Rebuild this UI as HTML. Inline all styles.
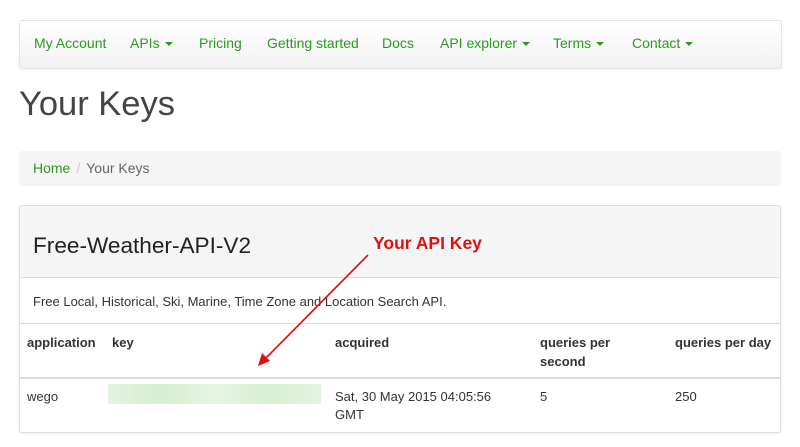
<!DOCTYPE html>
<html><head><style>
body{margin:0;width:800px;height:447px;background:#fff;font-family:"Liberation Sans",sans-serif;position:relative;overflow:hidden}
.a{position:absolute;white-space:nowrap}
.nav{left:19px;top:20px;width:761px;height:47px;border:1px solid #e4e4e4;border-radius:3px;background:linear-gradient(#fff,#f2f2f2);box-shadow:0 1px 3px rgba(0,0,0,.06)}
.n{top:35px;font-size:14px;color:#2b9a1f}
.c{display:inline-block;width:0;height:0;border-left:4px solid transparent;border-right:4px solid transparent;border-top:4px solid #2b9a1f;vertical-align:middle;margin-left:5px}
.t{font-size:13px;color:#333}
.b{font-weight:bold}
</style></head><body>
<div class="a nav"></div>
<div class="a n" style="left:34px">My Account</div>
<div class="a n" style="left:130px">APIs<span class="c"></span></div>
<div class="a n" style="left:199px">Pricing</div>
<div class="a n" style="left:267px">Getting started</div>
<div class="a n" style="left:382px">Docs</div>
<div class="a n" style="left:440px">API explorer<span class="c"></span></div>
<div class="a n" style="left:553px">Terms<span class="c"></span></div>
<div class="a n" style="left:632px">Contact<span class="c"></span></div>
<div class="a" style="left:19px;top:85px;font-size:34.5px;color:#444">Your Keys</div>
<div class="a" style="left:19px;top:151px;width:762px;height:35px;background:#f5f5f5;border-radius:3px"></div>
<div class="a" style="left:33px;top:160px;font-size:14px;color:#2b9a1f">Home<span style="color:#ccc;padding:0 6px">/</span><span style="color:#666">Your Keys</span></div>
<div class="a" style="left:19px;top:205px;width:760px;height:226px;border:1px solid #ddd;border-radius:3px;box-shadow:0 1px 2px rgba(0,0,0,.08)"></div>
<div class="a" style="left:20px;top:206px;width:760px;height:71px;background:#f5f5f5;border-bottom:1px solid #ddd"></div>
<div class="a" style="left:33px;top:233px;font-size:22.6px;color:#222">Free-Weather-API-V2</div>
<div class="a t" style="left:33px;top:294px">Free Local, Historical, Ski, Marine, Time Zone and Location Search API.</div>
<div class="a" style="left:20px;top:323px;width:760px;border-top:1px solid #ddd"></div>
<div class="a" style="left:20px;top:377px;width:760px;border-top:2px solid #ddd"></div>
<div class="a t b" style="left:27px;top:335px">application</div>
<div class="a t b" style="left:112px;top:335px">key</div>
<div class="a t b" style="left:335px;top:335px">acquired</div>
<div class="a t b" style="left:540px;top:333px;line-height:19px">queries per<br>second</div>
<div class="a t b" style="left:675px;top:335px">queries per day</div>
<div class="a t" style="left:27px;top:389px">wego</div>
<div class="a" style="left:108px;top:384px;width:213px;height:20px;background:linear-gradient(90deg,#e3f3df,#d6eed1,#e6f5e2,#d8efd3,#e3f3df)"></div>
<div class="a t" style="left:335px;top:388px;line-height:18px">Sat, 30 May 2015 04:05:56<br>GMT</div>
<div class="a t" style="left:540px;top:389px">5</div>
<div class="a t" style="left:675px;top:389px">250</div>
<div class="a b" style="left:373px;top:233px;font-size:17.5px;color:#e01010">Your API Key</div>
<svg class="a" style="left:0;top:0" width="800" height="447"><line x1="368" y1="255" x2="262" y2="362" stroke="#e01010" stroke-width="1.6"/><path d="M258 366 L262 353 L270 361 Z" fill="#e01010"/></svg>
</body></html>
